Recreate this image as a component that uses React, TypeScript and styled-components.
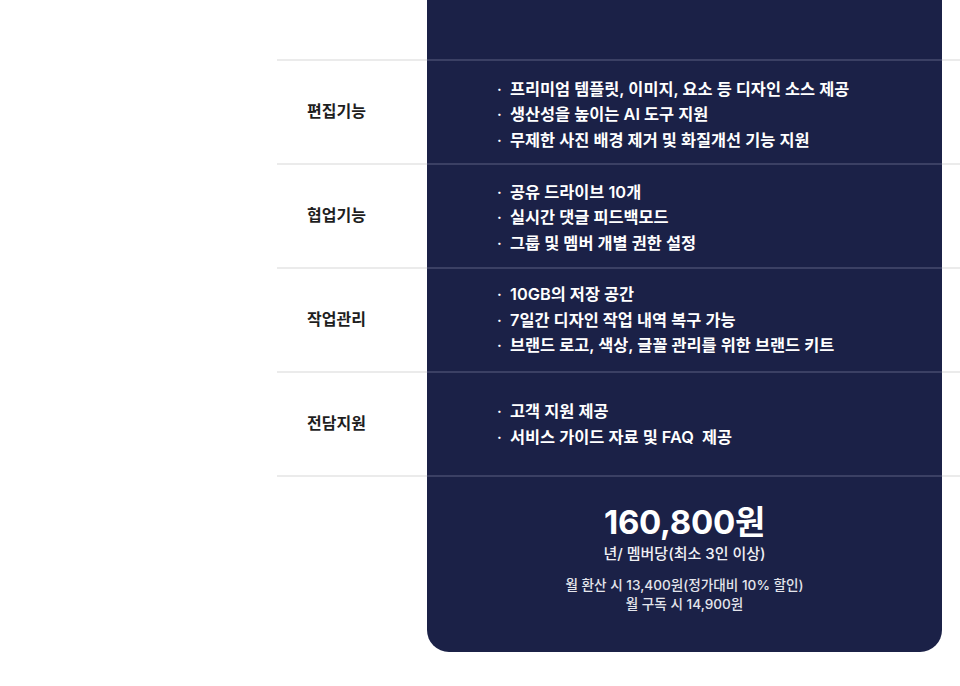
import React from "react";
import styled, { createGlobalStyle } from "styled-components";

const GlobalStyle = createGlobalStyle`
  html, body {
    margin: 0;
    padding: 0;
    background: #ffffff;
  }
  body {
    font-family: Inter, "Noto Sans CJK KR", sans-serif;
    -webkit-font-smoothing: antialiased;
  }
`;

const NAVY = "#1b2147";

const rows = [
  {
    label: "편집기능",
    offset: 6,
    items: [
      "프리미엄 템플릿, 이미지, 요소 등 디자인 소스 제공",
      "생산성을 높이는 AI 도구 지원",
      "무제한 사진 배경 제거 및 화질개선 기능 지원",
    ],
  },
  {
    label: "협업기능",
    offset: 4,
    items: ["공유 드라이브 10개", "실시간 댓글 피드백모드", "그룹 및 멤버 개별 권한 설정"],
  },
  {
    label: "작업관리",
    offset: 1,
    items: [
      "10GB의 저장 공간",
      "7일간 디자인 작업 내역 복구 가능",
      "브랜드 로고, 색상, 글꼴 관리를 위한 브랜드 키트",
    ],
  },
  {
    label: "전담지원",
    offset: 1,
    items: ["고객 지원 제공", "서비스 가이드 자료 및 FAQ  제공"],
  },
];

const App = () => {
  return (
    <>
      <GlobalStyle />
      <Page>
        <Table>
          <LabelCell $first />
          <PlanCell $first />
          <EdgeCell $first />

          {rows.map((row) => (
            <React.Fragment key={row.label}>
              <LabelCell>{row.label}</LabelCell>
              <PlanCell $offset={row.offset}>
                <FeatureList>
                  {row.items.map((item) => (
                    <li key={item}>{item}</li>
                  ))}
                </FeatureList>
              </PlanCell>
              <EdgeCell />
            </React.Fragment>
          ))}

          <LabelCell />
          <PriceCell>
            <Price>160,800원</Price>
            <PriceUnit>년/ 멤버당(최소 3인 이상)</PriceUnit>
            <PriceNote>
              월 환산 시 13,400원(정가대비 10% 할인)
              <br />
              월 구독 시 14,900원
            </PriceNote>
          </PriceCell>
          <EdgeCell />
        </Table>
      </Page>
    </>
  );
};

export default App;

// Styles
const Page = styled.div`
  width: 960px;
  height: 686px;
  overflow: hidden;
  padding-left: 277px;
  box-sizing: border-box;
`;

const Table = styled.div`
  display: grid;
  grid-template-columns: 150px 515px 18px;
  grid-template-rows: 59px repeat(4, 104px) 177px;
`;

const LabelCell = styled.div<{ $first?: boolean }>`
  border-top: ${(p) => (p.$first ? "none" : "2px solid #ebebeb")};
  display: flex;
  align-items: center;
  padding-left: 30px;
  padding-bottom: 4px;
  font-size: 16px;
  font-weight: 600;
  color: #1e1e1e;
  box-sizing: border-box;
`;

const EdgeCell = styled.div<{ $first?: boolean }>`
  border-top: ${(p) => (p.$first ? "none" : "2px solid #ebebeb")};
`;

const PlanCell = styled.div<{ $first?: boolean; $offset?: number }>`
  background: ${NAVY};
  border-top: ${(p) => (p.$first ? "none" : "2px solid #3b4064")};
  display: flex;
  align-items: center;
  padding-left: 70px;
  padding-top: ${(p) => p.$offset ?? 0}px;
  box-sizing: border-box;
`;

const FeatureList = styled.ul`
  list-style: none;
  margin: 0;
  padding: 0;
  display: flex;
  flex-direction: column;
  gap: 4px;

  li {
    position: relative;
    padding-left: 13px;
    font-size: 16.35px;
    line-height: 21.5px;
    font-weight: 600;
    color: #ffffff;
    white-space: pre;
  }

  li::before {
    content: "·";
    position: absolute;
    left: 0;
    top: 0;
    font-size: 15px;
    color: #ffffff;
  }
`;

const PriceCell = styled.div`
  background: ${NAVY};
  border-top: 2px solid #3b4064;
  border-radius: 0 0 22px 22px;
  display: flex;
  flex-direction: column;
  align-items: center;
  padding-top: 25px;
  box-sizing: border-box;
  color: #ffffff;
`;

const Price = styled.div`
  font-size: 33px;
  font-weight: 700;
  line-height: 40px;
  letter-spacing: -0.3px;
`;

const PriceUnit = styled.div`
  font-size: 15px;
  font-weight: 500;
  line-height: 20px;
  margin-top: 2px;
  color: #f0f0f4;
`;

const PriceNote = styled.div`
  font-size: 13.6px;
  font-weight: 500;
  line-height: 19px;
  margin-top: 12px;
  text-align: center;
  color: #e4e5ec;
`;
